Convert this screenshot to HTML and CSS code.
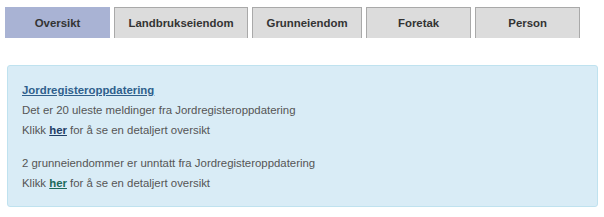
FILE: index.html
```html
<!DOCTYPE html>
<html lang="no">
<head>
    <meta charset="UTF-8">
    <title>Oversikt</title>
    <link rel="stylesheet" href="styles.css">
</head>
<body>
    <ul class="tabs">
        <li class="tab active">Oversikt</li>
        <li class="tab">Landbrukseiendom</li>
        <li class="tab">Grunneiendom</li>
        <li class="tab">Foretak</li>
        <li class="tab">Person</li>
    </ul>

    <div class="info-box">
        <p>
            <a href="#" class="title-link">Jordregisteroppdatering</a><br>
            Det er 20 uleste meldinger fra Jordregisteroppdatering<br>
            Klikk <a href="#" class="here-link">her</a> for å se en detaljert oversikt
        </p>
        <p>
            2 grunneiendommer er unntatt fra Jordregisteroppdatering<br>
            Klikk <a href="#" class="here-link visited">her</a> for å se en detaljert oversikt
        </p>
    </div>
</body>
</html>
```

FILE: styles.css
```css
* {
    box-sizing: border-box;
    margin: 0;
    padding: 0;
}

body {
    font-family: "Liberation Sans", Arial, sans-serif;
    font-size: 11.4px;
    color: #555;
    background-color: #fff;
    padding: 7px 6px 0 5px;
}

.tabs {
    display: flex;
    gap: 4px;
    list-style: none;
    height: 31px;
}

.tab {
    min-width: 105px;
    padding: 0 13.5px;
    display: flex;
    align-items: center;
    justify-content: center;
    background-color: #dcdcdc;
    border: 1px solid #a9a9a9;
    border-bottom: none;
    font-weight: bold;
    color: #333;
}

.tab.active {
    background-color: #a9b3d4;
    border-color: #a9b3d4;
}

.info-box {
    margin: 27px 0 0 2px;
    height: 142px;
    background-color: #d9ecf6;
    border: 1px solid #bfe2ef;
    border-radius: 3px;
    padding: 14px 14px 0 14px;
    line-height: 20px;
}

.info-box p {
    margin-bottom: 13px;
}

.info-box a {
    font-weight: bold;
    text-decoration: underline;
}

.title-link {
    color: #2f5f8c;
}

.here-link {
    color: #1f3e66;
}

.here-link.visited {
    color: #1c6b5b;
}
```
